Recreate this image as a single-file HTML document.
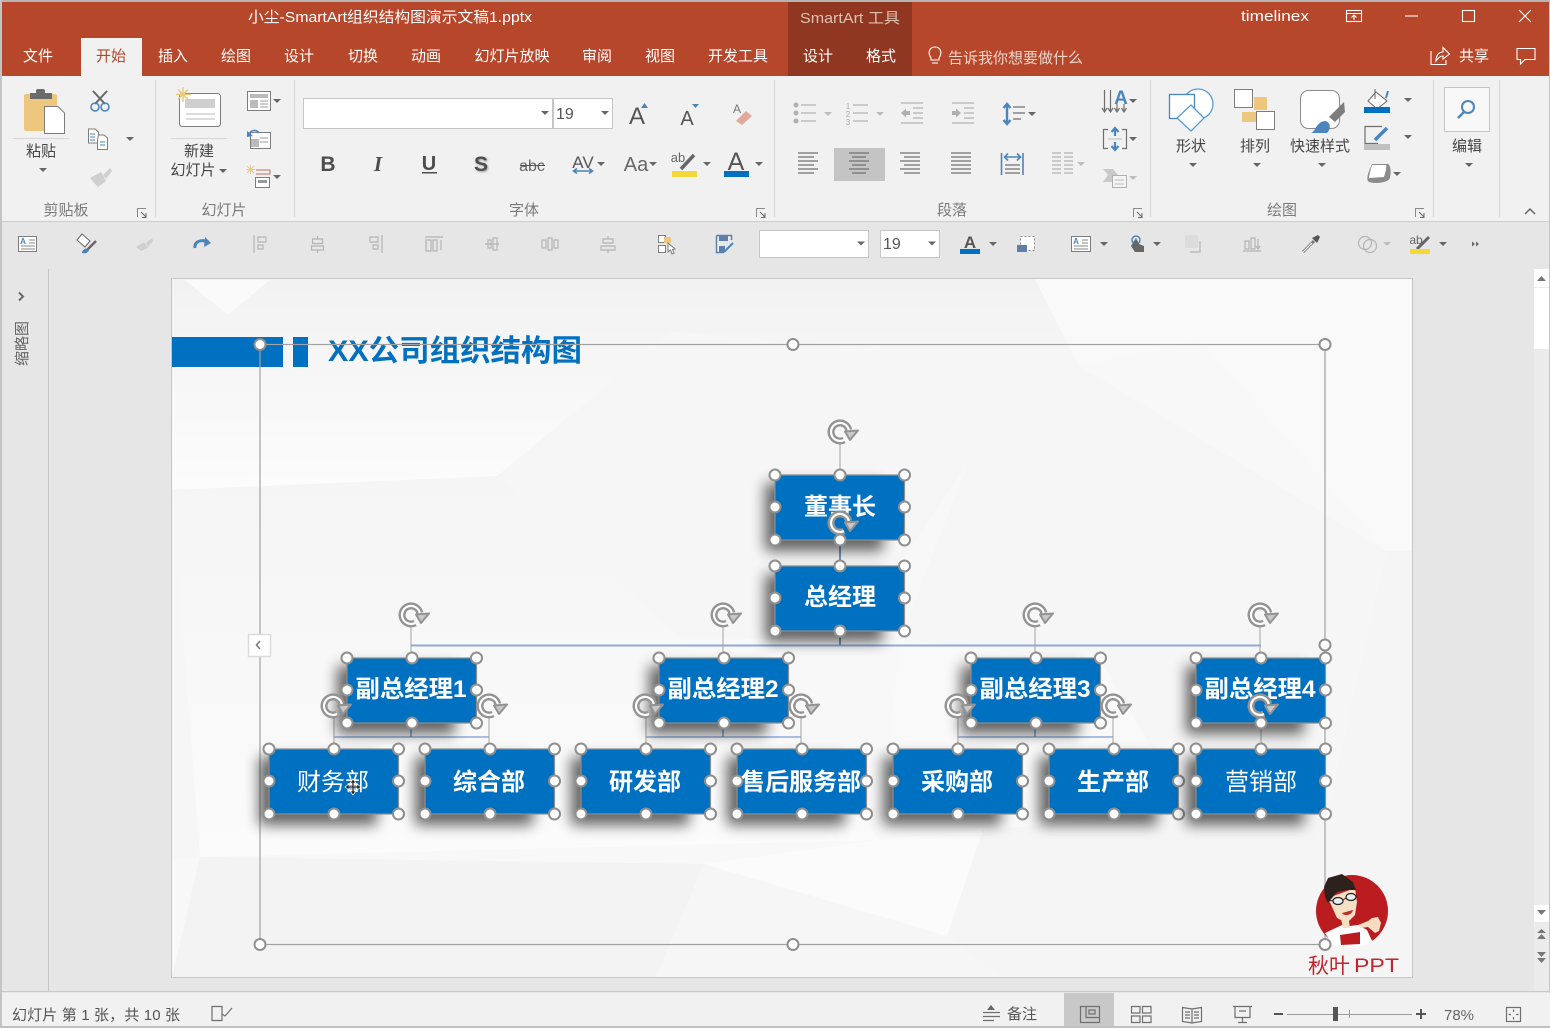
<!DOCTYPE html>
<html lang="zh-CN"><head><meta charset="utf-8"><title>小尘-SmartArt组织结构图演示文稿1.pptx</title>
<style>
html,body{margin:0;padding:0;background:#e6e6e6;width:1550px;height:1028px;overflow:hidden}
svg{display:block;position:absolute;left:0;top:0}
text{font-family:"Liberation Sans","Noto Sans CJK SC",sans-serif;font-size:15px;fill:#444}
.t{fill:#fff;text-anchor:middle}
.m{text-anchor:middle}
.l{fill:#7a7a7a;text-anchor:middle}
.b{fill:#fff;font-size:24px;font-weight:700;text-anchor:middle}
.n{fill:#fff;font-size:24px;text-anchor:middle}
.s{fill:none;stroke:#6f6f6f;stroke-width:1.2}
.g{fill:none;stroke:#b4b4b4;stroke-width:1.2}
.u{fill:none;stroke:#4a86bd;stroke-width:1.6}
.f{fill:#fff;stroke:#7d7d7d;stroke-width:1}
.fg{fill:#f4f4f4;stroke:#b0b0b0;stroke-width:1}
</style></head><body>
<svg width="1550" height="1028" viewBox="0 0 1550 1028" xmlns="http://www.w3.org/2000/svg">
<defs>
<filter id="sh" x="-40%" y="-60%" width="180%" height="220%"><feGaussianBlur stdDeviation="7"/></filter>
<linearGradient id="tg" x1="0" y1="0" x2="0" y2="1"><stop offset="0" stop-color="#f2f2f3"/><stop offset="1" stop-color="#fcfcfc"/></linearGradient>
<linearGradient id="mg" x1="0" y1="0" x2="0" y2="1"><stop offset="0" stop-color="#f5f5f5"/><stop offset="1" stop-color="#fbfbfb"/></linearGradient>
<polygon id="c" points="-4,-2 4,-2 0,2" fill="#666"/>
<polygon id="cg" points="-4,-2 4,-2 0,2" fill="#bdbdbd"/>
<g id="ln"><path d="M.5 9V.5H9" fill="none" stroke="#8a8a8a"/><path d="M4 4L9 9M9 5V9.500H5" fill="none" stroke="#666"/></g>
<circle id="h" r="5.500" fill="#fff" stroke="#8f8f8f" stroke-width="2"/>
<g id="bx">
<rect x="-10" y="8" width="118" height="68" fill="#000" opacity=".6" filter="url(#sh)"/>
<rect x="0" y="0" width="129.500" height="65" fill="#0070c0" stroke="#8f8f8f" stroke-width="1.200"/>
<use href="#h"/><use href="#h" x="65"/><use href="#h" x="129.500"/>
<use href="#h" y="32"/><use href="#h" x="129.500" y="32"/>
<use href="#h" y="65"/><use href="#h" x="65" y="65"/><use href="#h" x="129.500" y="65"/>
</g>
<g id="r">
<path d="M4 8A9 9 0 1 1 8.800 -2" fill="none" stroke="#939393" stroke-width="7"/>
<path d="M4 8A9 9 0 1 1 8.800 -2" fill="none" stroke="#fff" stroke-width="2.200"/>
<polygon points="5,-.5 18,-1.500 10,8" fill="#c8c8c8" stroke="#939393" stroke-width="2" stroke-linejoin="round"/>
</g>
</defs>

<!-- chrome -->
<rect width="1550" height="1028" fill="#e6e6e6"/>
<rect x="0" y="0" width="1550" height="76" fill="#b7472a"/>
<rect x="0" y="0" width="1550" height="2" fill="#b9b4b2"/>
<rect x="788" y="2" width="124" height="74" fill="#8f3720"/>
<rect x="0" y="76" width="1550" height="145" fill="#f1f1f1"/>
<rect x="0" y="221" width="1550" height="1" fill="#cdcdcd"/>
<rect x="81" y="38" width="61" height="38" fill="#f1f1f1"/>

<text x="248" y="22" style="font-size:15px;fill:#fff" textLength="284" lengthAdjust="spacingAndGlyphs">小尘-SmartArt组织结构图演示文稿1.pptx</text>
<text x="800" y="23" style="font-size:15px;fill:#e2bfb2" textLength="100" lengthAdjust="spacingAndGlyphs">SmartArt 工具</text>
<text x="1241" y="21" style="font-size:15px;fill:#fff" textLength="68" lengthAdjust="spacingAndGlyphs">timelinex</text>
<g fill="none" stroke="#fff" stroke-width="1.100">
<rect x="1346.500" y="10.500" width="15" height="11"/><path d="M1346.500 13.500H1361.500M1354 20V15M1351.500 17.500L1354 15L1356.500 17.500"/>
<path d="M1405 16H1418"/><rect x="1462.500" y="10.500" width="12" height="11"/><path d="M1519 10L1531 22M1531 10L1519 22"/>
<path d="M1431 51V64.500H1446V60M1436 61C1436 54 1440 52 1443 52V47.500L1449.500 54L1443 59V56C1440 56 1438 58 1436 61Z"/>
<path d="M1517 48.500H1535V59.500H1525L1520.500 64V59.500H1517Z"/>
<path d="M931 58C927 52 930 47 935 47C940 47 943 52 939 58V60H931Z"/><path d="M932 63H938"/>
</g>
<text x="38" y="61" class="t">文件</text>
<text x="111" y="61" class="m" style="fill:#b7472a">开始</text>
<text x="173" y="61" class="t">插入</text>
<text x="236" y="61" class="t">绘图</text>
<text x="299" y="61" class="t">设计</text>
<text x="363" y="61" class="t">切换</text>
<text x="426" y="61" class="t">动画</text>
<text x="512" y="61" class="t">幻灯片放映</text>
<text x="597" y="61" class="t">审阅</text>
<text x="660" y="61" class="t">视图</text>
<text x="738" y="61" class="t">开发工具</text>
<text x="818" y="61" class="t">设计</text>
<text x="881" y="61" class="t">格式</text>
<text x="1015.500" y="63" class="m" style="fill:#f0d5cb;font-size:15px">告诉我你想要做什么</text>
<text x="1474" y="61" class="t">共享</text>

<!-- ribbon separators -->
<g fill="#d6d6d6"><rect x="155" y="80" width="1" height="137"/><rect x="294" y="80" width="1" height="137"/><rect x="774" y="80" width="1" height="137"/><rect x="1150" y="80" width="1" height="137"/><rect x="1433" y="80" width="1" height="137"/><rect x="1499" y="80" width="1" height="137"/>
<rect x="13" y="138" width="56" height="1"/><rect x="171" y="138" width="56" height="1"/></g>

<!-- clipboard -->
<rect x="24" y="94" width="33" height="37" rx="2" fill="#eec77f"/>
<rect x="30" y="93" width="22" height="6" fill="#6b6b6b"/><rect x="36" y="89" width="9" height="5" rx="2" fill="#6b6b6b"/>
<path d="M44.500 106.500H58L64.500 113V133.500H44.500Z" class="f"/>
<text x="41" y="156" class="m">粘贴</text><use href="#c" x="43" y="170"/>
<path d="M93 91L105 104M107 91L95 104" stroke="#666" stroke-width="2" fill="none"/>
<circle cx="95" cy="107" r="4" class="u"/><circle cx="105" cy="107" r="4" class="u"/>
<path d="M88.500 129H95L98.500 132V143H88.500Z" class="f"/><path d="M98.500 135H104L107.500 138V149.500H97.500V140Z" class="f"/>
<path d="M90 134H95M90 137H95M90 140H95M100 142H105M100 145H105" stroke="#4a86bd"/>
<use href="#c" x="130" y="139"/>
<path d="M90 178L101 172L106 181L98 187ZM103 175L110 168L112 171L106 179Z" fill="#cfcfcf"/>
<text x="66" y="215" class="l">剪贴板</text><use href="#ln" x="137" y="208"/>

<!-- slides -->
<rect x="179.500" y="93.500" width="41" height="33" rx="3" class="f"/>
<rect x="185" y="99" width="30" height="9" fill="#cfcfcf"/>
<path d="M186 114H215M186 119H215" stroke="#bbb"/>
<path d="M183 87V102M176 94.500H191M178 89.500L188 99.500M188 89.500L178 99.500" stroke="#eec77f" stroke-width="1.500"/>
<text x="199" y="156" class="m">新建</text><text x="193" y="175" class="m">幻灯片</text><use href="#c" x="223" y="171"/>
<rect x="247.500" y="91.500" width="23" height="19" class="f"/><rect x="250" y="94" width="18" height="4" fill="#bbb"/><rect x="250" y="100" width="8" height="8" fill="#bbb"/><path d="M260 101H268M260 104H268M260 107H268" stroke="#999"/>
<use href="#c" x="277" y="101"/>
<rect x="250.500" y="132.500" width="20" height="16" class="f"/><rect x="251" y="139" width="8" height="8" fill="#bbb"/><path d="M260 138H268M260 142H268" stroke="#999"/>
<path d="M249 134C251 130 256 129 259 133" class="u" stroke-width="2"/><polygon points="247,131 253,136 247,137" fill="#4a86bd"/>
<path d="M247 166L254 173M254 166L247 173M250.500 165V174M246 169.500H255" stroke="#eec77f"/>
<path d="M256 170H270V174H256" fill="none" stroke="#c0705a"/>
<rect x="255.500" y="177.500" width="14" height="10" class="f"/><rect x="258" y="180" width="9" height="3" fill="#999"/>
<use href="#c" x="277" y="177"/>
<text x="224" y="215" class="l">幻灯片</text>

<!-- font -->
<rect x="303.500" y="98.500" width="249" height="30" fill="#fff" stroke="#c6c6c6"/>
<rect x="553.500" y="98.500" width="59" height="30" fill="#fff" stroke="#c6c6c6"/>
<use href="#c" x="545" y="113"/><use href="#c" x="605" y="113"/>
<text x="556" y="119" style="font-size:16px;fill:#555">19</text>
<text x="637" y="124" class="m" style="font-size:24px;fill:#555">A</text><polygon points="641,108 648,108 644.500,103" fill="#4a86bd"/>
<text x="687" y="125" class="m" style="font-size:20px;fill:#555">A</text><polygon points="692,104 699,104 695.500,108" fill="#4a86bd"/>
<text x="737" y="113" class="m" style="font-size:12px;fill:#777">A</text>
<path d="M736 121L746 111L752 116L742 125Z" fill="#e2a99a"/>
<text x="328" y="171" class="m" style="font-size:21px;font-weight:700;fill:#4d4d4d">B</text>
<text x="378" y="171" class="m" style="font-size:21px;font-style:italic;font-family:'Liberation Serif',serif;fill:#4d4d4d;font-weight:700">I</text>
<text x="429" y="170" class="m" style="font-size:20px;font-weight:700;fill:#4d4d4d">U</text><rect x="422" y="172" width="15" height="1.500" fill="#4d4d4d"/>
<text x="481" y="171" class="m" style="font-size:21px;font-weight:700;fill:#4d4d4d;filter:drop-shadow(1px 1px 1px #999)">S</text>
<text x="532" y="171" class="m" style="font-size:16px;fill:#666">abc</text><rect x="520" y="165" width="25" height="1" fill="#555"/>
<text x="583" y="168" class="m" style="font-size:17px;fill:#555">AV</text><path d="M574 171H592M577 168.500L573.500 171L577 173.500M589 168.500L592.500 171L589 173.500" class="u"/><use href="#c" x="601" y="164"/>
<text x="636" y="171" class="m" style="font-size:20px;fill:#666">Aa</text><use href="#c" x="653" y="164"/>
<text x="678" y="162" class="m" style="font-size:13px;fill:#666">ab</text><path d="M681 169L694 155" stroke="#666" stroke-width="3.500"/><rect x="672" y="171" width="25" height="6" fill="#f3d838"/><use href="#c" x="707" y="164"/>
<text x="736" y="170" class="m" style="font-size:25px;fill:#555">A</text><rect x="724" y="171" width="25" height="6" fill="#0070c0"/><use href="#c" x="759" y="164"/>
<text x="524" y="215" class="l">字体</text><use href="#ln" x="756" y="208"/>

<!-- paragraph -->
<g fill="#b0b0b0"><circle cx="796" cy="105" r="2.500"/><circle cx="796" cy="113" r="2.500"/><circle cx="796" cy="121" r="2.500"/></g>
<path d="M801 105H816M801 113H816M801 121H816M853 105H868M853 113H868M853 121H868M901 103H923M913 108H923M913 113H923M913 118H923M901 123H923M952 103H974M964 108H974M964 113H974M964 118H974M952 123H974" class="g"/>
<polygon points="901,113 906,108.500 906,111 910,111 910,115 906,115 906,117.500" fill="#b0b0b0"/>
<polygon points="961,113 956,108.500 956,111 952,111 952,115 956,115 956,117.500" fill="#b0b0b0"/>
<use href="#cg" x="828" y="114"/><use href="#cg" x="880" y="114"/>
<text x="848" y="109" class="m" style="font-size:8px;fill:#aaa">1</text><text x="848" y="117" class="m" style="font-size:8px;fill:#aaa">2</text><text x="848" y="125" class="m" style="font-size:8px;fill:#aaa">3</text>
<path d="M1007 105V123M1003.500 108L1007 104L1010.500 108M1003.500 120L1007 124L1010.500 120" class="u" style="stroke-width:2.400"/>
<path d="M1013 107H1025M1013 113H1025M1013 119H1021" class="s"/><use href="#c" x="1032" y="114"/>
<rect x="834" y="148" width="51" height="33" fill="#c4c4c4"/>
<path d="M798 153H818M798 157H814M798 161H818M798 165H814M798 169H818M798 173H814" class="s"/>
<path d="M849 153H869M852 157H866M849 161H869M852 165H866M849 169H869M852 173H866" class="s"/>
<path d="M900 153H920M904 157H920M900 161H920M904 165H920M900 169H920M904 173H920" class="s"/>
<path d="M951 153H971M951 157H971M951 161H971M951 165H971M951 169H971M951 173H971" class="s"/>
<path d="M1001.500 153V175M1023 153V175M1005 157H1020M1008 153.500L1004.500 157L1008 160.500M1017 153.500L1020.500 157L1017 160.500" class="u"/>
<path d="M1005 165H1020M1005 169H1020M1005 173H1020" class="s"/>
<path d="M1052 153H1061M1064 153H1073M1052 157H1061M1064 157H1073M1052 161H1061M1064 161H1073M1052 165H1061M1064 165H1073M1052 169H1061M1064 169H1073M1052 173H1061M1064 173H1073" class="g"/><use href="#cg" x="1081" y="164"/>
<path d="M1104.500 90V111M1110.500 90V111M1117 104V111M1124 104V111M1102 108L1104.500 112L1107 108M1108 108L1110.500 112L1113 108M1114.500 108L1117 112L1119.500 108M1121.500 108L1124 112L1126.500 108" class="s"/>
<text x="1121" y="104" class="m" style="font-size:19px;fill:#4a86bd;font-weight:700">A</text><use href="#c" x="1133" y="101"/>
<path d="M1108 129.500H1103.500V148.500H1108M1122 129.500H1126.500V148.500H1122" class="s"/><path d="M1108 139H1122" stroke="#bbb"/>
<path d="M1115 128V136M1111.500 132L1115 128L1118.500 132M1115 142V150M1111.500 146L1115 150L1118.500 146" class="u" style="stroke-width:2.200"/><use href="#c" x="1133" y="139"/>
<polygon points="1103,169 1113,169 1118,175 1113,182 1103,182 1108,175" fill="#c9c9c9"/><rect x="1112.500" y="175.500" width="14" height="12" class="fg"/><path d="M1115 180H1124M1115 184H1124" stroke="#bbb"/><use href="#cg" x="1133" y="178"/>
<text x="952" y="215" class="l">段落</text><use href="#ln" x="1133" y="208"/>

<!-- drawing -->
<circle cx="1198" cy="104" r="15" fill="#fff" stroke="#5b9bd5" stroke-width="1.300"/>
<rect x="1169.500" y="94.500" width="25" height="24" fill="#fff" stroke="#4a86bd" stroke-width="1.300"/>
<polygon points="1191,105 1204,118 1191,131 1177,118" fill="#fff" stroke="#5b9bd5" stroke-width="1.300"/>
<text x="1191" y="151" class="m">形状</text><use href="#c" x="1193" y="165"/>
<rect x="1254" y="97" width="13" height="13" fill="#eec77f"/><rect x="1242" y="112" width="14" height="10" fill="#eec77f"/>
<rect x="1234.500" y="89.500" width="18" height="18" class="f"/><rect x="1256.500" y="111.500" width="18" height="18" class="f"/>
<text x="1255" y="151" class="m">排列</text><use href="#c" x="1257" y="165"/>
<rect x="1300.500" y="90.500" width="39" height="38" rx="8" fill="#fff" stroke="#8a8a8a"/>
<polygon points="1344,102 1345,112 1335,122 1329,117" fill="#7d7d7d"/>
<path d="M1311 133C1316 131 1316 122 1325 121C1331 122 1331 129 1327 133Z" fill="#4a86bd"/>
<text x="1320" y="151" class="m">快速样式</text><use href="#c" x="1322" y="165"/>
<polygon points="1376,92 1387,101 1377,109 1368,101" fill="#fff" stroke="#666"/><path d="M1375 89V99" stroke="#666"/><path d="M1386 98L1388 91" stroke="#4a86bd" stroke-width="2"/>
<rect x="1364" y="107" width="26" height="6" fill="#0070c0"/><use href="#c" x="1408" y="100"/>
<path d="M1382 126.500H1365V143.500H1378" class="s"/><path d="M1375 140L1387 128" stroke="#4a86bd" stroke-width="3.500" fill="none"/><rect x="1364" y="144" width="26" height="6" fill="#c0c0c0"/><use href="#c" x="1408" y="137"/>
<path d="M1372 164H1388C1391 166 1391 172 1390 178C1388 183 1375 184 1369 182C1366 180 1367 175 1372 164Z" fill="#8b8b8b"/><path d="M1372 165H1386C1387 168 1385 173 1384 177L1369 178C1369 175 1371 169 1372 165Z" fill="#fff"/><use href="#c" x="1397" y="174"/>
<text x="1282" y="215" class="l">绘图</text><use href="#ln" x="1415" y="208"/>
<rect x="1444.500" y="87.500" width="45" height="44" fill="#f8f8f8" stroke="#c6c6c6"/>
<circle cx="1468" cy="107" r="6" fill="none" stroke="#4a86bd" stroke-width="2"/><path d="M1464 112L1458 118" stroke="#4a86bd" stroke-width="2.500"/>
<text x="1467" y="151" class="m">编辑</text><use href="#c" x="1469" y="165"/>
<path d="M1525 214L1530 209L1535 214" fill="none" stroke="#666" stroke-width="1.500"/>

<!-- toolbar 2 -->
<rect x="18.500" y="236.500" width="18" height="15" class="f"/><path d="M29 240H35M29 243H35M21 246H35M21 249H35" stroke="#888"/><text x="23" y="244" class="m" style="font-size:8px;fill:#4a86bd;font-weight:700">A</text>
<polygon points="77,240 82,234 90,241 85,247" fill="#fff" stroke="#666"/><path d="M87 250L96 241" stroke="#666" stroke-width="2.500"/><path d="M82 252C84 248 87 248 89 250C88 253 85 254 82 253Z" fill="#4a86bd"/>
<path d="M136 247L144 242L148 248L141 251ZM146 243L152 238L153 241L148 247Z" fill="#cfcfcf"/>
<path d="M195 248C194 241 202 239 208 242" class="u" style="stroke-width:3"/><polygon points="205,237 211,243 204,247" fill="#4a86bd"/>
<g fill="none" stroke="#b4b4b4" stroke-width="1.200">
<path d="M254 235V253M258 237H266V242H258ZM258 245H263V249H258Z"/>
<path d="M312.500 239H322.500V243.500H312.500ZM311.500 246H323.500V250H311.500ZM317.500 236V239M317.500 250V253"/>
<path d="M382 235V253M370 237H378V242H370ZM373 245H378V249H373Z"/>
<path d="M425 237H443M426 240H431V251H426ZM433 240H437V251H433ZM441 240V250"/>
<path d="M485 244H499M488 240H491V248H488ZM493 238H497V250H493Z"/>
<path d="M542 240H546V248H542ZM548 238H552V250H548ZM554 240H558V248H554Z"/>
<path d="M603 239H613V243H603ZM601 246H615V250H601ZM608 236V239M608 250V253"/>
</g>
<rect x="658.500" y="235.500" width="7" height="7" class="f"/><rect x="658.500" y="245.500" width="7" height="7" class="f"/><rect x="664" y="237" width="7" height="6" fill="#eec77f"/><path d="M668 243V252L670.500 250L672 254L674 253L672.500 249.500L675 249Z" class="f"/>
<path d="M716.500 235.500H731.500V240M716.500 235.500V252.500H724" fill="#f1f1f1" stroke="#5f7faa" stroke-width="1.500"/><rect x="719" y="236" width="9" height="5" fill="#5f7faa"/><rect x="719" y="246" width="6" height="6" fill="#5f7faa"/><path d="M724 252L733 243" stroke="#4a86bd" stroke-width="2"/>
<rect x="759.500" y="230.500" width="109" height="27" fill="#fff" stroke="#c6c6c6"/><use href="#c" x="861" y="243.500"/>
<rect x="880.500" y="230.500" width="59" height="27" fill="#fff" stroke="#c6c6c6"/><use href="#c" x="932" y="243.500"/>
<text x="883" y="249" style="font-size:16px;fill:#555">19</text>
<text x="970" y="248" class="m" style="font-size:17px;font-weight:700;fill:#555">A</text><rect x="960" y="249" width="20" height="5" fill="#0070c0"/><use href="#c" x="993" y="244"/>
<rect x="1020.500" y="236.500" width="14" height="14" fill="#fff" stroke="#888" stroke-dasharray="2 2"/><rect x="1017" y="245" width="10" height="7" fill="#5f7faa"/>
<rect x="1071.500" y="236.500" width="19" height="15" class="f"/><path d="M1082 240H1088M1082 243H1088M1074 246H1088M1074 249H1088" stroke="#888"/><text x="1076" y="244" class="m" style="font-size:8px;fill:#4a86bd;font-weight:700">A</text><use href="#c" x="1104" y="244"/>
<circle cx="1136" cy="240" r="4" fill="none" stroke="#4a86bd" stroke-width="1.500"/><path d="M1131 246L1136 238L1139 244L1144 246V252H1135Z" fill="#666"/><use href="#c" x="1157" y="244"/>
<rect x="1185" y="235" width="13" height="13" fill="#dcdcdc"/><path d="M1200 241V252H1190" class="g"/>
<path d="M1243 251H1261M1245 241H1249V249H1245ZM1251 238H1255V249H1251ZM1258 239V249M1256 246L1258 249L1260 246" class="g"/>
<path d="M1303 252L1314 241" stroke="#777" stroke-width="3" /><path d="M1302 253L1312 243" stroke="#fff" stroke-width="1.200"/><path d="M1312 238L1318 235L1320 237L1317 243Z" fill="#555"/>
<circle cx="1365" cy="243" r="6.500" class="g"/><circle cx="1370" cy="246" r="6.500" class="g"/><use href="#cg" x="1387" y="244"/>
<text x="1416" y="244" class="m" style="font-size:12px;fill:#666">ab</text><path d="M1417 249L1429 237" stroke="#666" stroke-width="3"/><rect x="1410" y="249" width="20" height="5" fill="#f3d838"/><use href="#c" x="1443" y="244"/>
<path d="M1472 241.500L1475 244L1472 246.500ZM1476 241.500L1479 244L1476 246.500Z" fill="#666"/>

<!-- side panel -->
<rect x="0" y="0" width="2" height="1028" fill="#c4c4c4"/>
<rect x="48" y="269" width="1" height="722" fill="#c6c6c6"/>
<path d="M19 292.500L23 296.500L19 300.500" fill="none" stroke="#6a6a6a" stroke-width="2"/>
<text transform="translate(27,366) rotate(-90)" style="font-size:15px;fill:#666">缩略图</text>

<!-- scrollbar -->
<rect x="1534" y="269" width="15" height="722" fill="#ebebeb"/>
<rect x="1534" y="269" width="15" height="18" fill="#fff"/><path d="M1537 281H1546L1541.500 276Z" fill="#777"/>
<rect x="1534" y="288" width="15" height="61" fill="#fff"/>
<rect x="1534" y="905" width="15" height="17" fill="#fff"/><path d="M1537 910H1546L1541.500 915Z" fill="#777"/>
<path d="M1537 933H1546L1541.500 929ZM1537 939H1546L1541.500 934Z" fill="#777"/>
<path d="M1537 952H1546L1541.500 957ZM1537 958H1546L1541.500 963Z" fill="#777"/>
<rect x="1549" y="0" width="1" height="1028" fill="#c4c4c4" />

<!-- slide -->
<rect x="172" y="279" width="1240" height="698" fill="#f8f8f9"/>
<polygon points="172,279 1035,279 1079,366 672,332 497,476 172,490" fill="url(#tg)"/>
<polygon points="185,280 270,280 228,315" fill="#fafafa"/>
<polygon points="1035,279 1412,279 1412,551 1386,551 1200,340 1079,366" fill="#f9f9f9"/>
<polygon points="672,332 1079,366 967,465 850,640 680,637 497,476" fill="#f6f6f7"/>
<polygon points="172,490 497,476 680,637 880,840 200,857" fill="url(#mg)"/>
<polygon points="172,490 200,857 172,860" fill="#f6f6f6"/>
<polygon points="1079,366 1386,551 1330,800 983,830 900,640 967,465" fill="#f6f6f7"/>
<polygon points="900,640 1100,660 1200,830 983,830 880,840" fill="#f9f9f9"/>
<polygon points="200,857 704,864 656,977 172,977" fill="#f3f3f4"/>
<polygon points="704,864 880,840 983,830 947,936" fill="#fbfbfb"/>
<polygon points="704,864 947,936 1000,977 656,977" fill="#f6f6f6"/>
<polygon points="983,830 1330,800 1386,551 1412,551 1412,977 1000,977 947,936" fill="#f5f5f6"/>
<rect x="171.500" y="278.500" width="1241" height="699" fill="none" stroke="#c6c6c6"/>
<rect x="172" y="337" width="111" height="30" fill="#0070c0"/><rect x="293" y="337" width="15" height="30" fill="#0070c0"/>
<text x="328" y="361" style="font-size:30px;font-weight:700;fill:#0070c0" textLength="254" lengthAdjust="spacingAndGlyphs">XX公司组织结构图</text>

<!-- frame -->
<rect x="260" y="344.500" width="1065" height="600" fill="none" stroke="#a2a2a2" stroke-width="1.200"/>
<rect x="248.500" y="634.500" width="22" height="22" fill="#fff" stroke="#dcdcdc" stroke-width="1.500"/>
<path d="M260 641L256.500 645L260 649" fill="none" stroke="#777" stroke-width="1.500"/>

<!-- logo -->
<circle cx="1352" cy="911" r="36" fill="#bb1c20"/>
<polygon points="1325,933 1342,925 1350,926 1358,925 1367,930 1373,943 1353,948 1333,945" fill="#fff"/>
<polygon points="1340,935 1360,932 1360,944 1341,945" fill="#bb1c20"/>
<path d="M1358 925L1368 921L1372 918L1378 917L1381 923L1379 931L1375 933L1368 927L1361 928Z" fill="#f6dcc0"/>
<polygon points="1328,898 1355,888 1357,902 1355,915 1347,923 1337,918" fill="#f7dfc4"/>
<polygon points="1341,919 1349,921 1350,928 1343,928" fill="#f7dfc4"/>
<polygon points="1324,887 1328,878 1342,874 1353,882 1356,890 1347,890 1337,892 1332,898 1328,903 1325,897" fill="#2d211c"/>
<ellipse cx="1338" cy="901" rx="5" ry="3.500" fill="#e8eef2" stroke="#222" stroke-width="1.200"/><ellipse cx="1351" cy="897" rx="5" ry="3.500" fill="#e8eef2" stroke="#222" stroke-width="1.200"/><path d="M1343 900L1346 898M1328 900L1333 901" stroke="#222"/>
<path d="M1342 913L1353 910C1352 915 1345 917 1342 913Z" fill="#b8322a"/>
<text x="1308" y="973" style="font-size:21px;fill:#c0262c" textLength="42">秋叶</text>
<text x="1354" y="972" style="font-size:19px;fill:#c0262c" textLength="45" lengthAdjust="spacingAndGlyphs">PPT</text>

<!-- frame handles -->
<use href="#h" x="260" y="344.500"/><use href="#h" x="793" y="344.500"/><use href="#h" x="1325" y="344.500"/>
<use href="#h" x="260" y="944.500"/><use href="#h" x="793" y="944.500"/><use href="#h" x="1325" y="944.500"/>
<use href="#h" x="1325" y="645"/>

<!-- connectors -->
<g fill="none">
<path d="M411 645.500H1261" stroke="#8eaad6" stroke-width="2"/>
<path d="M840 539V566M840 631V645" stroke="#456f9e" stroke-width="1.400"/>
<path d="M840 443V475M411 625V658M723 625V658M1035 625V658M1260 625V658" stroke="#a2a2a2"/>
<path d="M334 737H489M646 737H801M958 737H1113" stroke="#8eaad6" stroke-width="1.500"/>
<path d="M411 722V737M723 722V737M1035 722V737" stroke="#456f9e"/>
<path d="M334 715V749M489 715V749M646 715V749M801 715V749M958 715V749M1113 715V749M1261 722V749" stroke="#a2a2a2"/>
</g>

<!-- boxes -->
<use href="#bx" x="775" y="475"/><use href="#bx" x="775" y="566"/>
<use href="#bx" x="347" y="658"/><use href="#bx" x="659" y="658"/><use href="#bx" x="971" y="658"/><use href="#bx" x="1196" y="658"/>
<use href="#bx" x="269" y="749"/><use href="#bx" x="425" y="749"/><use href="#bx" x="581" y="749"/><use href="#bx" x="737" y="749"/><use href="#bx" x="893" y="749"/><use href="#bx" x="1049" y="749"/><use href="#bx" x="1196" y="749"/>
<text x="840" y="515" class="b">董事长</text>
<text x="840" y="605" class="b">总经理</text>
<text x="411" y="697" class="b" textLength="111" lengthAdjust="spacingAndGlyphs">副总经理1</text>
<text x="723" y="697" class="b" textLength="111" lengthAdjust="spacingAndGlyphs">副总经理2</text>
<text x="1035" y="697" class="b" textLength="111" lengthAdjust="spacingAndGlyphs">副总经理3</text>
<text x="1260" y="697" class="b" textLength="111" lengthAdjust="spacingAndGlyphs">副总经理4</text>
<text x="333" y="790" class="n">财务部</text>
<text x="489" y="790" class="b">综合部</text>
<text x="645" y="790" class="b">研发部</text>
<text x="801" y="790" class="b">售后服务部</text>
<text x="957" y="790" class="b">采购部</text>
<text x="1113" y="790" class="b">生产部</text>
<text x="1261" y="790" class="n">营销部</text>

<!-- rotate handles -->
<use href="#r" x="840" y="432"/><use href="#r" x="840" y="523"/>
<use href="#r" x="411" y="615"/><use href="#r" x="723" y="615"/><use href="#r" x="1035" y="615"/><use href="#r" x="1260" y="615"/>
<use href="#r" x="333" y="706"/><use href="#r" x="489" y="706"/><use href="#r" x="645" y="706"/><use href="#r" x="801" y="706"/><use href="#r" x="957" y="706"/><use href="#r" x="1113" y="706"/><use href="#r" x="1260" y="706"/>

<!-- cursor -->
<path d="M353 779L356 783H354V786H357V784L361 787L357 790V788H354V791H356L353 795L350 791H352V788H349V790L345 787L349 784V786H352V783H350Z" fill="#222" stroke="#fff" stroke-width=".700"/>

<!-- status bar -->
<rect x="2" y="991" width="1548" height="1" fill="#c8c8c8"/>
<rect x="2" y="993" width="1548" height="33" fill="#f1f1f1"/>
<rect x="0" y="1026" width="1550" height="2" fill="#c0c0c0"/>
<text x="12" y="1020" style="fill:#555" textLength="168">幻灯片 第 1 张，共 10 张</text>
<path d="M212 1006.500H222V1020.500H212Z" class="s"/><path d="M222 1014L225 1016L232 1008" class="s"/>
<polygon points="991,1005 987,1010 995,1010" fill="#666"/><path d="M983 1012.500H1000M983 1016.500H1000M983 1020.500H994" class="s"/>
<text x="1022" y="1019" class="m" style="fill:#555">备注</text>
<rect x="1064" y="993" width="50" height="33" fill="#c8c8c8"/>
<path d="M1080.500 1006.500H1099.500V1022.500H1080.500ZM1086 1006.500V1017.500H1099.500" class="s"/><rect x="1089" y="1010" width="6" height="4" class="s"/>
<path d="M1131.500 1006.500H1140V1013H1131.500ZM1142.500 1006.500H1151V1013H1142.500ZM1131.500 1016H1140V1022.500H1131.500ZM1142.500 1016H1151V1022.500H1142.500Z" class="s"/>
<path d="M1182.500 1007.500L1192 1009L1201.500 1007.500V1021.500L1192 1023L1182.500 1021.500ZM1192 1009V1023M1185 1012H1190M1185 1015H1190M1185 1018H1190M1194 1012H1199M1194 1015H1199M1194 1018H1199" class="s"/>
<path d="M1233 1006.500H1252M1235 1006.500V1017.500H1250V1006.500ZM1242.500 1017.500V1022M1238 1022.500H1247M1239 1011H1246" class="s"/>
<rect x="1274" y="1013" width="9" height="2" fill="#555"/>
<rect x="1287" y="1014" width="125" height="1" fill="#9a9a9a"/><rect x="1349" y="1010" width="1" height="8" fill="#9a9a9a"/>
<rect x="1333" y="1007" width="5" height="14" fill="#555"/>
<path d="M1416 1014H1426M1421 1009V1019" stroke="#555" stroke-width="2"/>
<text x="1459" y="1020" class="m" style="font-size:15px;fill:#666">78%</text>
<rect x="1506.500" y="1007.500" width="14" height="14" class="s"/><path d="M1513.500 1009.500V1012M1513.500 1017V1019.500M1508.500 1014.500H1511M1516 1014.500H1518.500" class="s"/>
</svg>
</body></html>
